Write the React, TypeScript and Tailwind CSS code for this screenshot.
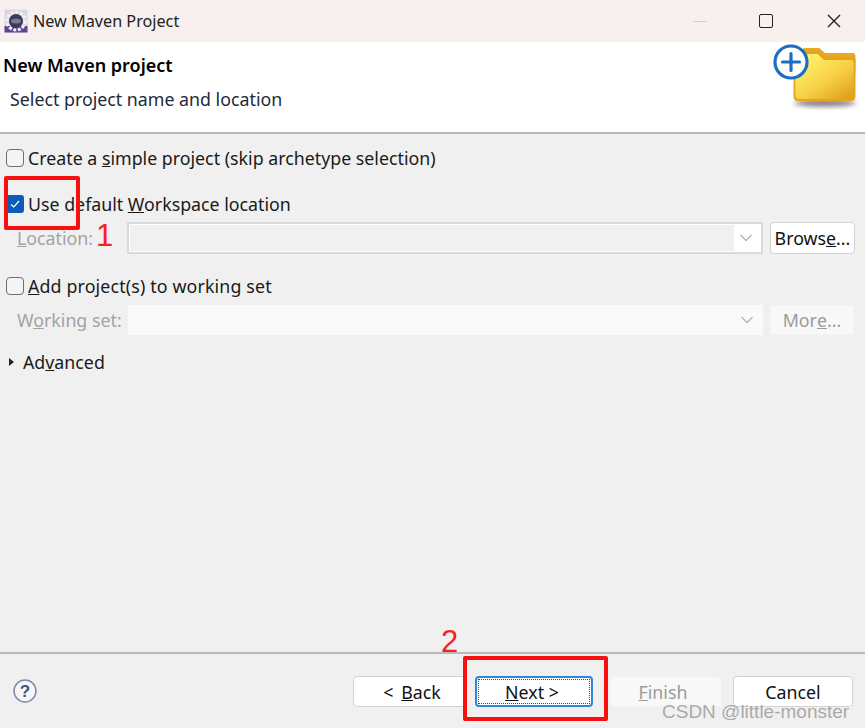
const font = { fontFamily: '"Noto Sans", "Open Sans", sans-serif' };

function Check({ checked = false }: { checked?: boolean }) {
  if (checked) {
    return (
      <span className="flex h-[18px] w-[18px] shrink-0 items-center justify-center rounded-[3px] bg-[#0b5cb8]">
        <svg width="12" height="12" viewBox="0 0 12 12" fill="none" stroke="#fff" strokeWidth="1.2">
          <path d="M2 6.5 L4.8 9 L10 3" />
        </svg>
      </span>
    );
  }
  return <span className="h-[18px] w-[18px] shrink-0 rounded-[4px] border border-[#6e6e6e] bg-[#f4f4f4]" />;
}

function Chevron() {
  return (
    <svg width="14" height="8" viewBox="0 0 14 8" fill="none" stroke="#b4b4b4" strokeWidth="1.3" className="shrink-0">
      <path d="M1.5 1 L7 6.5 L12.5 1" />
    </svg>
  );
}

function FolderIcon() {
  return (
    <svg width="92" height="68" viewBox="0 0 92 68" className="absolute right-0 top-[1px]">
      <defs>
        <linearGradient id="fold" x1="0.1" y1="0.1" x2="0.9" y2="1">
          <stop offset="0" stopColor="#fff36e" />
          <stop offset="0.55" stopColor="#f7cf45" />
          <stop offset="1" stopColor="#e0a01c" />
        </linearGradient>
        <filter id="blur" x="-20%" y="-50%" width="140%" height="200%">
          <feGaussianBlur stdDeviation="2.5" />
        </filter>
      </defs>
      <ellipse cx="52" cy="60" rx="31" ry="3.5" fill="#5b4a5e" opacity="0.75" filter="url(#blur)" />
      <g transform="translate(2,0) scale(0.925,1)">
        <path d="M30 7 Q30 5 32 5 H48 L54 10 H84 Q87 10 87 13 V30 H30 Z" fill="#eaa925" />
        <path d="M26 12 Q26 8 30 8 H47 L54 14 H83 Q87 14 87 18 V53 Q87 58 82 58 H25 Q20 58 20 53 V30 Z" fill="#e5a31e" />
        <path d="M26 14 Q26 11 29 11 H46 L53 17 H82 Q85 17 85 20 V52 Q85 56 81 56 H26 Q22 56 22 52 V30 Z" fill="url(#fold)" />
      </g>
      <circle cx="18" cy="19" r="16" fill="#fff" stroke="#1a6fc4" strokeWidth="3.2" />
      <path d="M18 10.5 V27.5 M9.5 19 H26.5" stroke="#1a6fc4" strokeWidth="3.2" strokeLinecap="round" />
    </svg>
  );
}

function MavenIcon() {
  return (
    <svg width="24" height="24" viewBox="0 0 24 24">
      <rect x="0.5" y="0.5" width="23" height="23" fill="#d9d6e2" />
      <rect x="0.5" y="17" width="23" height="6.5" fill="#5f4692" />
      <circle cx="12" cy="12" r="9" fill="none" stroke="#f2f2f4" strokeWidth="3" strokeDasharray="3 1.6" />
      <circle cx="12" cy="12" r="7" fill="#3c3a55" />
      <ellipse cx="12" cy="12" rx="5" ry="2.5" fill="#7b7998" />
    </svg>
  );
}

function Button({ children, disabled = false, className = "" }: { children: React.ReactNode; disabled?: boolean; className?: string }) {
  return (
    <div
      className={`flex items-center justify-center rounded-[4px] border ${
        disabled ? "border-[#f3f3f3] bg-[#f8f8f8] text-[#9b9b9b]" : "border-[#d2d2d2] bg-white text-[#111]"
      } ${className}`}
    >
      {children}
    </div>
  );
}

export default function App() {
  return (
    <div className="relative flex h-[728px] w-[865px] flex-col overflow-hidden bg-[#f0f0f0] text-[17.8px] leading-[24px] text-[#1a1a1a]" style={font}>
      {/* title bar */}
      <div className="flex h-[42px] shrink-0 items-center rounded-tr-[8px] bg-[#f7f0ee] pl-[4px]">
        <MavenIcon />
        <span className="ml-[5px] text-[16.2px] text-[#222]">New Maven Project</span>
        <div className="ml-auto flex items-center pr-[24px]">
          <span className="h-px w-[14px] bg-[#cfcfcf]" />
          <span className="ml-[52px] h-[14px] w-[14px] rounded-[2px] border-[1.5px] border-[#222]" />
          <svg width="14" height="14" viewBox="0 0 14 14" stroke="#222" strokeWidth="1.4" className="ml-[54px]">
            <path d="M1 1 L13 13 M13 1 L1 13" />
          </svg>
        </div>
      </div>

      {/* header */}
      <div className="relative h-[92px] shrink-0 border-b-2 border-[#b9b9b9] bg-white">
        <div className="pl-[3px] pt-[11px] text-[18px] font-semibold text-black">New Maven project</div>
        <div className="pl-[10px] pt-[10px] text-[#1c2a3a]">Select project name and location</div>
        <FolderIcon />
      </div>

      {/* form */}
      <div className="flex flex-1 flex-col pl-[6px] pr-[10px] pt-[12px]">
        <div className="flex h-[24px] items-center gap-[4px]">
          <Check />
          <span>Create a <u>s</u>imple project (skip archetype selection)</span>
        </div>
        <div className="mt-[22px] flex h-[24px] items-center gap-[4px]">
          <Check checked />
          <span>Use default <u>W</u>orkspace location</span>
        </div>
        <div className="mt-[5px] flex h-[34px] items-center">
          <span className="w-[121px] pl-[11px] text-[#a3a3a3]"><u>L</u>ocation:</span>
          <div className="flex h-[32px] w-[636px] items-center justify-between border-2 border-[#d9d9d9] bg-white p-[1px] pr-[8px]">
            <div className="h-full w-[604px] bg-[#f0f0f0]" />
            <Chevron />
          </div>
          <Button className="ml-[7px] h-[32px] w-[85px]">Brows<u>e</u>...</Button>
        </div>
        <div className="mt-[19px] flex h-[24px] items-center gap-[4px]">
          <Check />
          <span className="tracking-[0.15px]"><u>A</u>dd project(s) to working set</span>
        </div>
        <div className="mt-[6px] flex h-[32px] items-center">
          <span className="w-[122px] pl-[11px] text-[#a3a3a3]">W<u>o</u>rking set:</span>
          <div className="flex h-[30px] w-[635px] items-center justify-end bg-[#fafafa] pr-[9px]">
            <Chevron />
          </div>
          <Button disabled className="ml-[7px] h-[30px] w-[84px]">Mor<u>e</u>...</Button>
        </div>
        <div className="mt-[14px] flex h-[24px] items-center">
          <span className="ml-[3px] h-0 w-0 border-y-[4.5px] border-l-[5px] border-y-transparent border-l-[#222]" />
          <span className="ml-[9px]">Ad<u>v</u>anced</span>
        </div>
      </div>

      {/* footer */}
      <div className="flex h-[76px] shrink-0 items-center border-t-2 border-[#b9b9b9] pl-[13px] pr-[12px]">
        <svg width="24" height="24" viewBox="0 0 24 24">
          <circle cx="12" cy="12" r="11" fill="#f6f6f8" stroke="#7d8ba8" strokeWidth="1.5" />
          <text x="12" y="18" textAnchor="middle" fontSize="17" fontWeight="700" fill="#3f5580" fontFamily="Liberation Sans, sans-serif">?</text>
        </svg>
        <Button className="ml-[316px] h-[31px] w-[114px] pl-[4px] pt-[2px]"><span className="mr-[8px]">&lt;</span><u>B</u>ack</Button>
        <div className="ml-[8px] flex h-[31px] w-[118px] items-center justify-center rounded-[4px] border-2 border-[#2f87d6] bg-white p-[1px] text-[#111]">
          <div className="flex h-full w-full items-center justify-center border border-dotted border-[#444] pr-[4px] pt-[2px]"><u>N</u>ext &gt;</div>
        </div>
        <Button disabled className="ml-[17px] h-[31px] w-[112px] pr-[6px] pt-[2px]"><u>F</u>inish</Button>
        <Button className="ml-[11px] h-[31px] w-[120px] pt-[2px]">Cancel</Button>
      </div>

      {/* annotations */}
      <div className="absolute left-[4px] top-[176px] h-[54px] w-[76px] rounded-[2px] border-[4px] border-[#fa0f0f]" />
      <div className="absolute left-[463px] top-[656px] h-[65px] w-[145px] rounded-[2px] border-[4px] border-[#fa0f0f]" />
      <span className="absolute left-[96px] top-[214px] text-[31px] leading-[44px] text-[#fa2020]" style={{ fontFamily: '"Liberation Sans", sans-serif' }}>1</span>
      <span className="absolute left-[441px] top-[620px] text-[31px] leading-[44px] text-[#fa2020]" style={{ fontFamily: '"Liberation Sans", sans-serif' }}>2</span>
      <span className="absolute left-[662px] top-[699px] text-[19px] leading-[26px] text-[#77777799]" style={{ fontFamily: '"Liberation Sans", sans-serif' }}>CSDN @little-monster</span>
    </div>
  );
}
